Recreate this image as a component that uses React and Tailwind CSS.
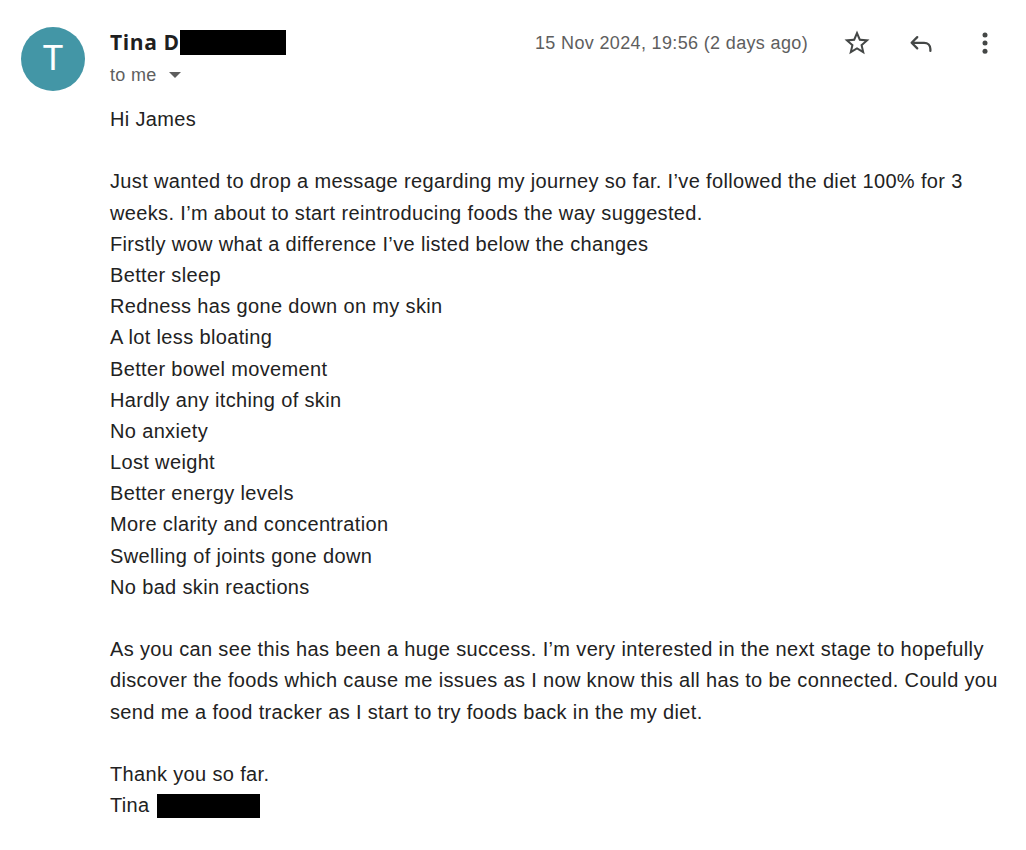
import React from "react";

const lines = [
  "Hi James",
  "",
  "Just wanted to drop a message regarding my journey so far. I\u2019ve followed the diet 100% for 3",
  "weeks. I\u2019m about to start reintroducing foods the way suggested.",
  "Firstly wow what a difference I\u2019ve listed below the changes",
  "Better sleep",
  "Redness has gone down on my skin",
  "A lot less bloating",
  "Better bowel movement",
  "Hardly any itching of skin",
  "No anxiety",
  "Lost weight",
  "Better energy levels",
  "More clarity and concentration",
  "Swelling of joints gone down",
  "No bad skin reactions",
  "",
  "As you can see this has been a huge success. I\u2019m very interested in the next stage to hopefully",
  "discover the foods which cause me issues as I now know this all has to be connected. Could you",
  "send me a food tracker as I start to try foods back in the my diet.",
  "",
  "Thank you so far.",
];

export default function App() {
  return (
    <div className="w-[1026px] h-[850px] bg-white relative overflow-hidden font-['Liberation_Sans',Arial,sans-serif]">
      <div className="flex pl-[21px] pt-[27px]">
        <div className="w-[64px] h-[64px] rounded-full bg-[#4396a6] flex items-center justify-center text-white text-[35px] font-normal shrink-0 font-['Roboto',sans-serif]">
          T
        </div>
        <div className="ml-[25px] flex-1 flex flex-col">
          <div className="flex items-start">
            <div className="flex flex-col">
              <div className="flex items-center h-[32px]">
                <span className="w-[70px] whitespace-nowrap text-[21px] font-bold tracking-[0.6px] text-[#1f1f1f] font-['Open_Sans',sans-serif]">Tina D</span>
                <span className="inline-block w-[106px] h-[25px] bg-black -mt-[2px]"></span>
              </div>
              <div className="flex items-center h-[32px] text-[18px] text-[#5e5e5e] tracking-[0.3px] font-['Liberation_Sans',sans-serif]">
                <span>to me</span>
                <svg width="12" height="8" viewBox="0 0 12 8" className="ml-[12px] mt-[1px]">
                  <path d="M0 0 L12 0 L6 6 Z" fill="#5e5e5e" />
                </svg>
              </div>
            </div>
            <div className="ml-auto flex items-center h-[32px] pr-[26px]">
              <span className="text-[18px] text-[#5e5e5e] mr-[34px] tracking-[0.35px] font-['Liberation_Sans',sans-serif]">15 Nov 2024, 19:56 (2 days ago)</span>
              <svg width="30" height="30" viewBox="0 0 24 24" className="mr-[34px]">
                <path fill="#444746" d="M22 9.24l-7.19-.62L12 2 9.19 8.63 2 9.24l5.46 4.73L5.82 21 12 17.27 18.18 21l-1.63-7.03L22 9.24zM12 15.4l-3.76 2.27 1-4.28-3.32-2.88 4.38-.38L12 6.1l1.71 4.04 4.38.38-3.32 2.88 1 4.28L12 15.4z" />
              </svg>
              <svg width="30" height="30" viewBox="0 0 24 24" className="mr-[34px] mt-[2px]" fill="none">
                <path d="M9 6.5 L4.5 11 L9 15.5 M4.5 11 H14.5 C17.5 11 19.5 13 19.5 16 V17.5" stroke="#444746" strokeWidth="1.8" strokeLinejoin="round" strokeLinecap="round" />
              </svg>
              <svg width="30" height="30" viewBox="0 0 24 24">
                <circle cx="12" cy="5.5" r="2" fill="#444746" />
                <circle cx="12" cy="12" r="2" fill="#444746" />
                <circle cx="12" cy="18.5" r="2" fill="#444746" />
              </svg>
            </div>
          </div>
          <div className="mt-[13px] text-[20px] leading-[31.2px] tracking-[0.35px] text-[#222222] font-['Liberation_Sans',Arial,sans-serif]">
            {lines.map((l, i) => (
              <div key={i} className="whitespace-nowrap h-[31.2px]">{l}</div>
            ))}
            <div className="whitespace-nowrap h-[31.2px] flex items-center">
              <span>Tina</span>
              <span className="inline-block w-[103px] h-[24px] bg-black ml-[7px]"></span>
            </div>
          </div>
        </div>
      </div>
    </div>
  );
}
